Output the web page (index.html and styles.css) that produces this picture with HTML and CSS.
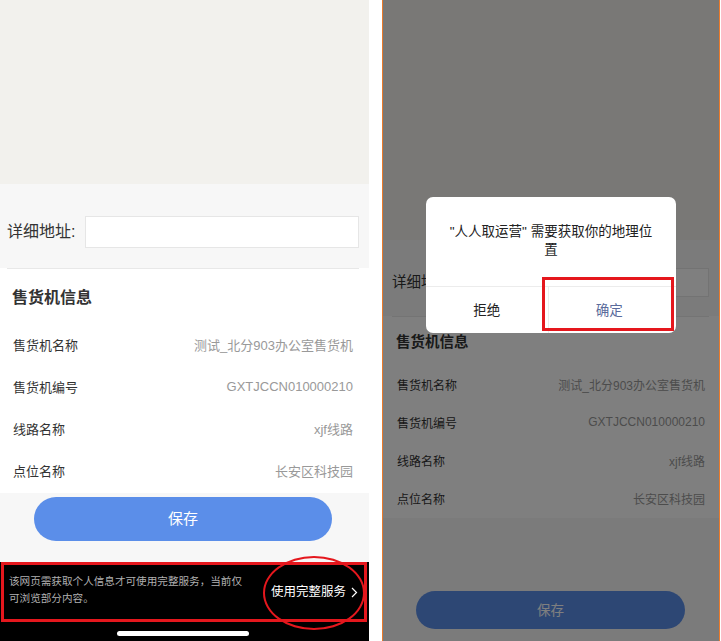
FILE: index.html
```html
<!DOCTYPE html>
<html lang="zh-CN">
<head>
<meta charset="utf-8">
<title>售货机信息</title>
<link rel="stylesheet" href="styles.css">
</head>
<body>
<div class="stage">
  <section class="phone phone--left">
    <div class="hero"></div>
    <div class="addr">
      <span class="addr-label">详细地址:</span>
      <div class="addr-input"></div>
    </div>
    <div class="info">
      <div class="divider"></div>
      <h2 class="info-title">售货机信息</h2>
      <div class="row"><span class="row-label">售货机名称</span><span class="row-value">测试_北分903办公室售货机</span></div>
      <div class="row"><span class="row-label">售货机编号</span><span class="row-value">GXTJCCN010000210</span></div>
      <div class="row"><span class="row-label">线路名称</span><span class="row-value">xjf线路</span></div>
      <div class="row"><span class="row-label">点位名称</span><span class="row-value">长安区科技园</span></div>
    </div>
    <div class="actions"><div class="save">保存</div></div>
    <div class="notice">
      <p class="notice-text">该网页需获取个人信息才可使用完整服务，当前仅可浏览部分内容。</p>
      <span class="notice-link">使用完整服务<svg class="chev" width="7" height="11" viewBox="0 0 7 11"><path d="M1 1l4.5 4.5L1 10" fill="none" stroke="#fff" stroke-width="1.2"/></svg></span>
      <div class="home-bar"></div>
    </div>
    <div class="mark-rect mark-rect--notice"></div>
    <div class="mark-ellipse"></div>
  </section>

  <section class="phone phone--right">
    <div class="hero"></div>
    <div class="addr">
      <span class="addr-label">详细地址:</span>
      <div class="addr-input"></div>
    </div>
    <div class="info">
      <div class="divider"></div>
      <h2 class="info-title">售货机信息</h2>
      <div class="row"><span class="row-label">售货机名称</span><span class="row-value">测试_北分903办公室售货机</span></div>
      <div class="row"><span class="row-label">售货机编号</span><span class="row-value">GXTJCCN010000210</span></div>
      <div class="row"><span class="row-label">线路名称</span><span class="row-value">xjf线路</span></div>
      <div class="row"><span class="row-label">点位名称</span><span class="row-value">长安区科技园</span></div>
    </div>
    <div class="actions"><div class="save">保存</div></div>
    <div class="mask"></div>
    <div class="dialog">
      <p class="dialog-title">"人人取运营" 需要获取你的地理位置</p>
      <div class="dialog-buttons">
        <span class="dialog-btn">拒绝</span>
        <span class="dialog-btn dialog-btn--ok">确定</span>
      </div>
    </div>
    <div class="mark-rect mark-rect--ok"></div>
  </section>
</div>
</body>
</html>
```

FILE: styles.css
```css
* { box-sizing: border-box; margin: 0; padding: 0; }

html, body {
  width: 721px;
  height: 641px;
  background: #fff;
  overflow: hidden;
}

body {
  font-family: "Liberation Sans", "Noto Sans CJK SC", sans-serif;
  color: #333;
}

.stage {
  display: flex;
  gap: 13px;
  height: 641px;
}

.phone {
  position: relative;
  display: flex;
  flex-direction: column;
  height: 641px;
  overflow: hidden;
  background: #f7f7f7;
}

.phone--left { width: 369px; }

.phone--right {
  width: 338px;
  border-left: 1px solid #ea7a2a;
  border-right: 1px solid #ea7a2a;
}

.hero { background: #f2f1ed; flex: none; }
.phone--left .hero { height: 184px; }
.phone--right .hero { height: 240px; }

.addr {
  display: flex;
  align-items: flex-start;
  background: #f7f7f7;
  flex: none;
}
.phone--left .addr { height: 84px; padding: 32px 10px 0 7px; }
.phone--right .addr { height: 76px; padding: 28px 10px 0 9px; }

.addr-label { flex: none; color: #333; }
.phone--left .addr-label { width: 78px; font-size: 16px; line-height: 31px; }
.phone--right .addr-label { width: 71px; font-size: 14.5px; line-height: 28px; }

.addr-input {
  flex: 1;
  background: #fff;
  border: 1px solid #e6e6e6;
}
.phone--left .addr-input { height: 32px; }
.phone--right .addr-input { height: 29px; }

.info { background: #fff; flex: none; }

.divider { height: 1px; background: #e8e8e8; }
.phone--left .divider { margin: 0 10px 0 7px; }
.phone--right .divider { margin: 0 10px 0 9px; }

.info-title {
  font-weight: 700;
  color: #333;
  display: flex;
  align-items: center;
}
.phone--left .info-title { height: 56px; font-size: 16px; padding: 0 0 2px 12px; }
.phone--right .info-title { height: 49px; font-size: 14.5px; padding: 0 0 2px 13px; }

.row {
  display: flex;
  align-items: center;
  justify-content: space-between;
}
.phone--left .row { height: 42px; padding: 0 16px 3px 13px; font-size: 13px; }
.phone--right .row { height: 38px; padding: 0 14px 2px 14px; font-size: 12px; }

.row-label { color: #333; }
.row-value { color: #999; }

.actions { flex: 1; background: #f7f7f7; }
.phone--left .actions { flex: none; height: 69px; padding: 4px 37px 0 34px; }
.phone--right .actions { padding: 73px 0 0 33px; }

.save {
  background: #5b8ee9;
  color: #fff;
  display: flex;
  align-items: center;
  justify-content: center;
}
.phone--left .save { height: 44px; border-radius: 22px; font-size: 15px; padding-bottom: 3px; }
.phone--right .save { width: 269px; height: 38px; border-radius: 19px; font-size: 13.5px; padding-bottom: 2px; }

.notice {
  position: relative;
  flex: 1;
  background: #000;
  display: flex;
  align-items: flex-start;
  justify-content: space-between;
  padding: 11px 11px 0 9px;
}

.notice-text {
  width: 236px;
  font-size: 10.6px;
  line-height: 17px;
  color: #b0b0b0;
}

.notice-link {
  display: flex;
  align-items: center;
  gap: 5px;
  color: #fff;
  font-size: 12.5px;
  line-height: 18px;
  margin-top: 10px;
}

.chev { display: block; }

.home-bar {
  position: absolute;
  left: 117px;
  top: 69px;
  width: 132px;
  height: 5px;
  border-radius: 3px;
  background: #fff;
}

.mark-rect {
  position: absolute;
  border: 3px solid #e5171d;
}
.mark-rect--notice { left: 1px; top: 562px; width: 366px; height: 60px; }
.mark-rect--ok { left: 159px; top: 277px; width: 132px; height: 54px; }

.mark-ellipse {
  position: absolute;
  left: 263px;
  top: 556px;
  width: 102px;
  height: 74px;
  border: 2.5px solid #e5171d;
  border-radius: 50%;
}

.mask {
  position: absolute;
  inset: 0;
  background: rgba(0, 0, 0, 0.5);
}

.dialog {
  position: absolute;
  left: 43px;
  top: 197px;
  width: 250px;
  height: 136px;
  background: #fff;
  border-radius: 7px;
  display: flex;
  flex-direction: column;
}

.dialog-title {
  height: 89px;
  padding: 26px 18px 0;
  font-size: 13.5px;
  line-height: 18px;
  color: #222;
  text-align: center;
}

.dialog-buttons {
  flex: 1;
  display: flex;
  border-top: 1px solid #ececec;
}

.dialog-btn {
  flex: 1;
  display: flex;
  align-items: center;
  justify-content: center;
  font-size: 13.5px;
  color: #222;
  padding-bottom: 2px;
}

.dialog-btn--ok {
  color: #5a6b9c;
  border-left: 1px solid #ececec;
  padding-right: 6px;
}
```
